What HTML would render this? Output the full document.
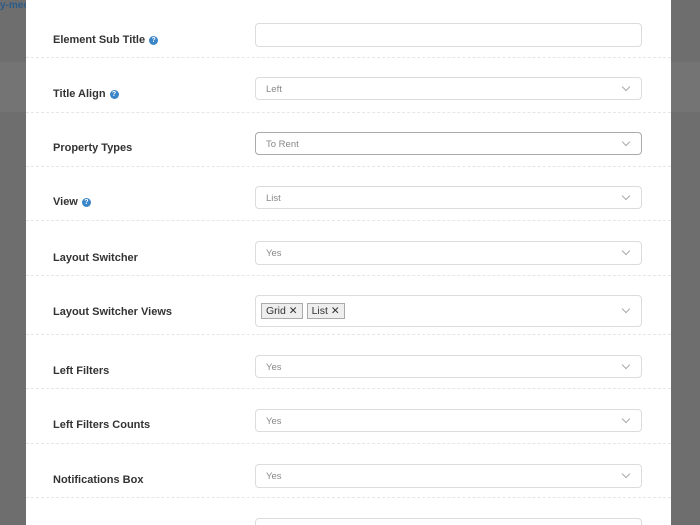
<!DOCTYPE html>
<html><head><style>
html,body{margin:0;width:700px;height:525px;overflow:hidden}
body{background:#6e6e6e;font-family:"Liberation Sans",sans-serif;position:relative}
.modal{position:absolute;left:26px;top:0;width:645px;height:525px;background:#fff;overflow:hidden}
.row{position:absolute;left:0;width:645px;border-bottom:1px dashed #e6e6e6}
.lbl{position:absolute;left:27px;font-size:11px;font-weight:bold;color:#333}
.q{display:inline-block;width:9px;height:9px;border-radius:50%;background:#3a86c8;color:#fff;font-size:7px;text-align:center;line-height:9px;margin-left:4px;vertical-align:middle}
.in{position:absolute;left:229px;width:385px;border:1px solid #dcdcdc;border-radius:4px;background:#fff;font-size:9.5px;color:#888}
.in span.t{position:absolute;left:10px}
.ch{position:absolute;right:12px;width:5px;height:5px;border-right:1px solid #aaa;border-bottom:1px solid #aaa;transform:rotate(45deg)}
.tag{display:inline-block;border:1px solid #aaa;background:#eee;color:#333;font-size:10.5px;padding:1px 4px;margin-right:4px}
</style></head><body>
<div style="position:absolute;left:0;top:0;font-size:10px;color:#2a5b8a;font-weight:bold">y-mec</div>
<div style="position:absolute;left:0;top:62px;width:26px;height:50px;background:#747474"></div>
<div style="position:absolute;left:671px;top:62px;width:29px;height:50px;background:#747474"></div>
<div class="modal">
<div class="row" style="top:0;height:57px"><div class="lbl" style="top:34px">Element Sub Title<span class="q">?</span></div><div class="in" style="top:23px;height:22px"></div></div>
<div class="row" style="top:58px;height:54px"><div class="lbl" style="top:30px">Title Align<span class="q">?</span></div><div class="in" style="top:19px;height:21px"><span class="t" style="top:6px">Left</span><i class="ch" style="top:6px"></i></div></div>
<div class="row" style="top:113px;height:53px"><div class="lbl" style="top:29px">Property Types</div><div class="in" style="top:19px;height:21px;border-color:#aaa"><span class="t" style="top:6px">To Rent</span><i class="ch" style="top:6px"></i></div></div>
<div class="row" style="top:167px;height:53px"><div class="lbl" style="top:29px">View<span class="q">?</span></div><div class="in" style="top:19px;height:21px"><span class="t" style="top:6px">List</span><i class="ch" style="top:6px"></i></div></div>
<div class="row" style="top:221px;height:54px"><div class="lbl" style="top:31px">Layout Switcher</div><div class="in" style="top:20px;height:22px"><span class="t" style="top:6px">Yes</span><i class="ch" style="top:6px"></i></div></div>
<div class="row" style="top:276px;height:58px"><div class="lbl" style="top:30px">Layout Switcher Views</div><div class="in" style="top:19px;height:30px"><span style="position:absolute;left:5px;top:7px"><span class="tag">Grid ✕</span><span class="tag">List ✕</span></span><i class="ch" style="top:10px"></i></div></div>
<div class="row" style="top:335px;height:53px"><div class="lbl" style="top:30px">Left Filters</div><div class="in" style="top:20px;height:21px"><span class="t" style="top:6px">Yes</span><i class="ch" style="top:6px"></i></div></div>
<div class="row" style="top:389px;height:54px"><div class="lbl" style="top:30px">Left Filters Counts</div><div class="in" style="top:20px;height:21px"><span class="t" style="top:6px">Yes</span><i class="ch" style="top:6px"></i></div></div>
<div class="row" style="top:444px;height:53px"><div class="lbl" style="top:30px">Notifications Box</div><div class="in" style="top:20px;height:22px"><span class="t" style="top:6px">Yes</span><i class="ch" style="top:6px"></i></div></div>
<div class="in" style="top:518px;height:22px"></div>
</div>
</body></html>
